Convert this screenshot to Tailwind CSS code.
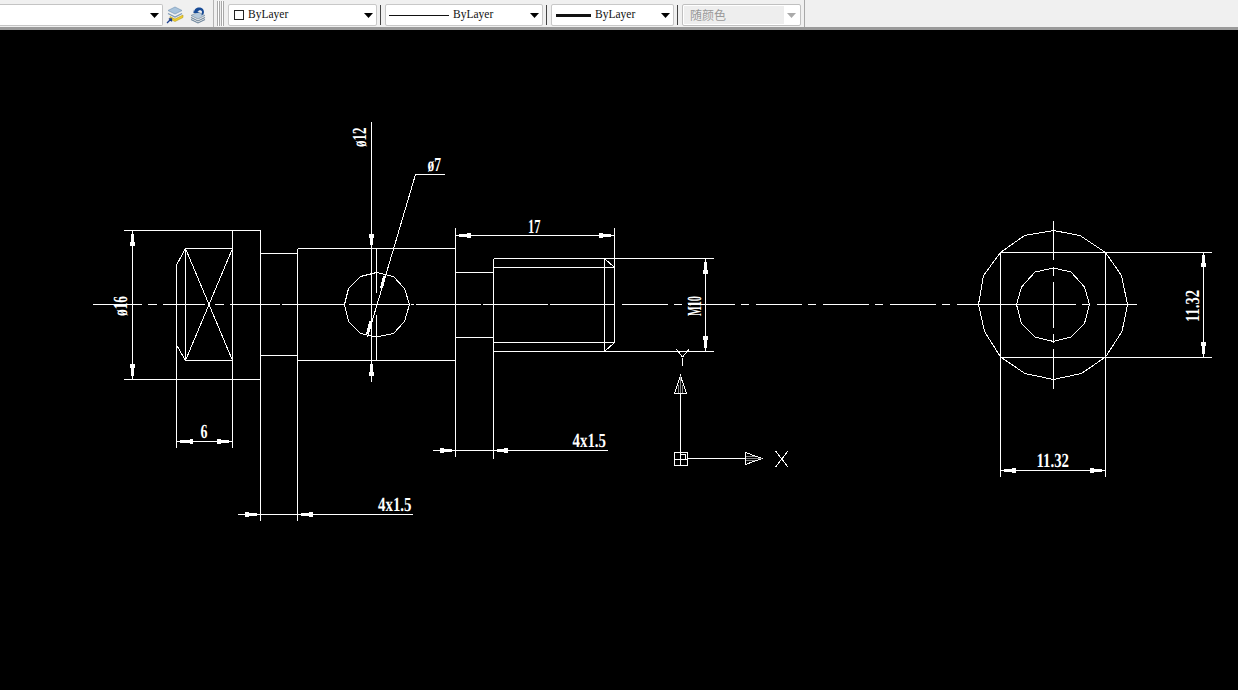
<!DOCTYPE html>
<html lang="zh">
<head>
<meta charset="utf-8">
<title>CAD drawing</title>
<script src="https://cdn.jsdelivr.net/npm/@tailwindcss/browser@4"></script>
</head>
<body class="bg-black overflow-hidden w-[1238px] h-[690px] flex flex-col">
<header class="h-[30px] shrink-0 bg-[#f0f0f0] flex items-stretch border-b-[3px] border-b-[#9a9a9a] font-['Liberation_Serif',serif] text-[11.500px] text-[#111]">
  <div class="w-[214px] shrink-0 flex items-center pt-[3px] border-r border-r-[#b4b4b4]">
    <div class="w-[163px] h-[22px] bg-white border border-l-0 border-[#c4c4c4] rounded-r-[2px] flex items-center justify-end pr-[3px]">
      <svg width="9" height="5" viewBox="0 0 9 5"><path d="M0 0h9L4.500 5z" fill="#000"/></svg>
    </div>
    <svg class="ml-[3px]" width="18" height="18" viewBox="0 0 18 18">
      <path d="M9 1l7 3.500-7 3.500-7-3.500z" fill="#a9c4dc" stroke="#6d8fb0" stroke-width=".6"/>
      <path d="M2 7.500l7 3.500 7-3.500" fill="none" stroke="#7f9bb6" stroke-width="1.300"/>
      <path d="M4 10.500l5 2.500 8-4v2.500l-8 4-5-2.500z" fill="#f0cf2c" stroke="#a98f12" stroke-width=".5"/>
      <path d="M1 17l4-4M2.800 12.800H5.500V15.500" fill="none" stroke="#1c3f8f" stroke-width="1.300"/>
    </svg>
    <svg class="ml-[5px]" width="18" height="18" viewBox="0 0 18 18">
      <path d="M9 6l7 3.500-7 3.500-7-3.500z" fill="#b7cadb" stroke="#6d7f90" stroke-width=".6"/>
      <path d="M2 11.500l7 3.500 7-3.500M2 13.500l7 3.500 7-3.500" fill="none" stroke="#71889d" stroke-width="1.100"/>
      <path d="M5 6.500C5 3 8 1 11 1.500c3 .5 4.500 3 3.800 6L12.500 9.500 13 5.500C12 3.500 9.500 4 8.500 6L10.500 7H4.500L4 3.500z" fill="#174a96"/>
    </svg>
  </div>
  <div class="w-[3px] ml-[3px] my-[1px] border-x border-[#a8a8a8] bg-white"></div>
  <div class="w-[3px] ml-[1px] my-[1px] border-x border-[#a8a8a8] bg-white"></div>
  <div class="flex items-center pt-[3px] ml-[4px]">
    <div class="w-[149px] h-[22px] bg-white border border-[#c8c8c8] rounded-[2px] flex items-center pl-[5px] pr-[3px]">
      <span class="w-[10px] h-[10px] border border-[#222] bg-white"></span>
      <span class="ml-[4px] flex-1">ByLayer</span>
      <svg width="9" height="5" viewBox="0 0 9 5"><path d="M0 0h9L4.500 5z" fill="#000"/></svg>
    </div>
    <div class="w-px h-[20px] bg-[#444] ml-[3px]"></div>
    <div class="w-[158px] h-[22px] ml-[4px] bg-white border border-[#c8c8c8] rounded-[2px] flex items-center pl-[3px] pr-[3px]">
      <span class="w-[60px] h-px bg-[#111]"></span>
      <span class="ml-[4px] flex-1">ByLayer</span>
      <svg width="9" height="5" viewBox="0 0 9 5"><path d="M0 0h9L4.500 5z" fill="#000"/></svg>
    </div>
    <div class="w-px h-[20px] bg-[#444] ml-[3px]"></div>
    <div class="w-[123px] h-[22px] ml-[4px] bg-white border border-[#c8c8c8] rounded-[2px] flex items-center pl-[4px] pr-[3px]">
      <span class="w-[35px] h-[3px] bg-[#111]"></span>
      <span class="ml-[4px] flex-1">ByLayer</span>
      <svg width="9" height="5" viewBox="0 0 9 5"><path d="M0 0h9L4.500 5z" fill="#000"/></svg>
    </div>
    <div class="w-px h-[20px] bg-[#444] ml-[3px]"></div>
    <div class="w-[119px] h-[22px] ml-[4px] bg-white border border-[#c0c0c0] rounded-[2px] flex items-center pr-[4px]">
      <span class="w-[100px] h-[18px] ml-px bg-[#eeeeee] pl-[6px] text-[12px] leading-[18px] text-[#999] font-['Noto_Sans_CJK_SC',sans-serif]">随颜色</span>
      <span class="flex-1"></span>
      <svg width="9" height="5" viewBox="0 0 9 5"><path d="M0 0h9L4.500 5z" fill="#aaa"/></svg>
    </div>
    <div class="w-px h-[27px] -mt-[3px] bg-[#a8a8a8] ml-[3px]"></div>
  </div>
</header>
<main class="flex-1">
<svg class="block" width="1238" height="660" viewBox="0 30 1238 660" shape-rendering="crispEdges">
  <!-- centre lines -->
  <path fill="none" stroke="#fff" d="M93 304.500H142M148 304.500H157M163 304.500H205M215 304.500H224M230 304.500H280M282 304.500H344M349 304.500H409M411 304.500H414M416 304.500H481M483 304.500H548M550 304.500H614M622 304.500H668M674 304.500H682M688 304.500H735M741 304.500H749M756 304.500H802M808 304.500H816M823 304.500H869M875 304.500H883M890 304.500H936M942 304.500H950M957 304.500H1076M1082 304.500H1089M1097 304.500H1137M1053.500 221V260M1053.500 267V276M1053.500 282V328M1053.500 334V343M1053.500 349V389"/>
  <!-- left head -->
  <path fill="none" stroke="#fff" d="M124 230.500H260.500M124 379.500H260.500M132.500 230V379M232.500 230V448M260.500 230V521M176.500 265V448M185.500 248.500V360.500M185.500 248.500H232.500M185.500 360.500H232.500M176.500 265L185.500 248.500M176.500 345L185.500 360.500M185.500 248.500L232.500 360.500M232.500 248.500L185.500 360.500M176.500 441.500H232.500M260.500 253.500H297.500M260.500 355.500H297.500M297.500 248.500V521M297.500 248.500H455.500M297.500 360.500H455.500M238 514.500H413"/>
  <!-- cross hole -->
  <path fill="none" stroke="#fff" d="M371.500 122V382M376.500 248.500V293M376.500 315V360.500M415.500 174.500L367.500 337M415.500 174.500H445"/>
  <polygon fill="none" stroke="#fff" points="376.500,272.500 393.500,276.500 404.500,288.500 409.500,304.500 404.500,321.500 393.500,333.500 376.500,337 360.500,333.500 348.500,321.500 344.500,304.500 348.500,288.500 360.500,276.500"/>
  <!-- thread -->
  <path fill="none" stroke="#fff" d="M455.500 228V457M455.500 235.500H614.500M614.500 228V342.500M455.500 272.500H493.500M455.500 337.500H493.500M493.500 258.500V459M493.500 258.500H714M493.500 267.500H614.500M493.500 342.500H614.500M493.500 351.500H714M604.500 258.500V351.500M604.500 258.500L614.500 267.500M604.500 351.500L614.500 342.500M705.500 258.500V351.500M433 450.500H608"/>
  <!-- end view -->
  <polygon fill="none" stroke="#fff" points="1053.500,230.500 1080,235.500 1105.500,252.500 1121.500,275.500 1127.500,304.500 1122,331.500 1105.500,357 1081.500,373.500 1053.500,379.500 1025,373.500 1000.500,357 984.500,331.500 978.500,304.500 983.500,275.500 1000.500,252.500 1024.500,235.500"/>
  <polygon fill="none" stroke="#fff" points="1053.500,268 1071,272 1084.500,287 1089.500,304.500 1084.500,323.500 1071,337 1053.500,341.500 1035,337 1021.500,323.500 1016.500,304.500 1021.500,287 1035,272"/>
  <path fill="none" stroke="#fff" d="M1000.500 252.500H1212M1000.500 357.500H1212M1000.500 252.500V477M1105.500 252.500V477M1203.500 252.500V357.500M1000.500 470.500H1105.500"/>
  <!-- dimension arrows -->
  <path fill="#fff" d="M130 242h5v4h-5zM131 234h3v8h-3zM130 364h5v4h-5zM131 368h3v8h-3zM180 440h10v3h-10zM190 439h3v5h-3zM217 439h4v5h-4zM221 440h8v3h-8zM245 512h4v5h-4zM249 513h8v3h-8zM301 513h8v3h-8zM309 512h4v5h-4zM369 234h5v4h-5zM370 238h3v7h-3zM370 364h3v8h-3zM369 372h5v4h-5zM459 234h8v3h-8zM467 233h4v5h-4zM599 233h4v5h-4zM603 234h8v3h-8zM703 270h5v4h-5zM704 262h3v8h-3zM703 336h5v4h-5zM704 340h3v8h-3zM440 448h4v5h-4zM444 449h8v3h-8zM497 449h7v3h-7zM504 448h4v5h-4zM1004 469h8v3h-8zM1012 468h4v5h-4zM1090 468h4v5h-4zM1094 469h8v3h-8zM1201 263h5v4h-5zM1202 255h3v8h-3zM1201 342h5v4h-5zM1202 346h3v8h-3z"/>
  <path fill="none" stroke="#fff" stroke-width="3" d="M384.500 276L381.500 288M371 321L367.500 334"/>
  <!-- UCS icon -->
  <path fill="none" stroke="#fff" d="M680.500 393V458M674.500 393.500H686.500L680.500 376zM674.500 452.500H687.500V465.500H674.500zM674.500 459.500H687.500M680.500 452.500V465.500M680.500 454.500H685.500V459.500M687 458.500H745.500M745.500 452.500V464.500L762 458.500zM775.500 451L788 467M788 451L775.500 467M676.500 349.500L682.500 357M689 349.500L682.500 357M682.500 358V366"/>
  <path fill="none" stroke="#8a8a8a" d="M678.500 393V385M682.500 393V385M680.500 376V393M745.500 456.500H755M745.500 460.500H755M745.500 458.500H762"/>
  <!-- dimension text -->
  <g fill="#fff" font-family="'Liberation Serif',serif" font-weight="700" font-size="20" text-rendering="geometricPrecision">
    <text x="200.500" y="438" textLength="7" lengthAdjust="spacingAndGlyphs">6</text>
    <text x="528" y="232.500" textLength="12.500" lengthAdjust="spacingAndGlyphs">17</text>
    <text x="427.500" y="171" textLength="13.500" lengthAdjust="spacingAndGlyphs">ø7</text>
    <text x="572.500" y="447" textLength="33.500" lengthAdjust="spacingAndGlyphs">4x1.5</text>
    <text x="378" y="511" textLength="33.500" lengthAdjust="spacingAndGlyphs">4x1.5</text>
    <text x="1036.500" y="467" textLength="32.500" lengthAdjust="spacingAndGlyphs">11.32</text>
    <text transform="translate(126.500 316) rotate(-90)" textLength="20" lengthAdjust="spacingAndGlyphs">ø16</text>
    <text transform="translate(366 147) rotate(-90)" textLength="19.500" lengthAdjust="spacingAndGlyphs">ø12</text>
    <text transform="translate(701 316) rotate(-90)" textLength="20" lengthAdjust="spacingAndGlyphs">M10</text>
    <text transform="translate(1198.500 322) rotate(-90)" textLength="32" lengthAdjust="spacingAndGlyphs">11.32</text>
  </g>
</svg>
</main>
</body>
</html>
